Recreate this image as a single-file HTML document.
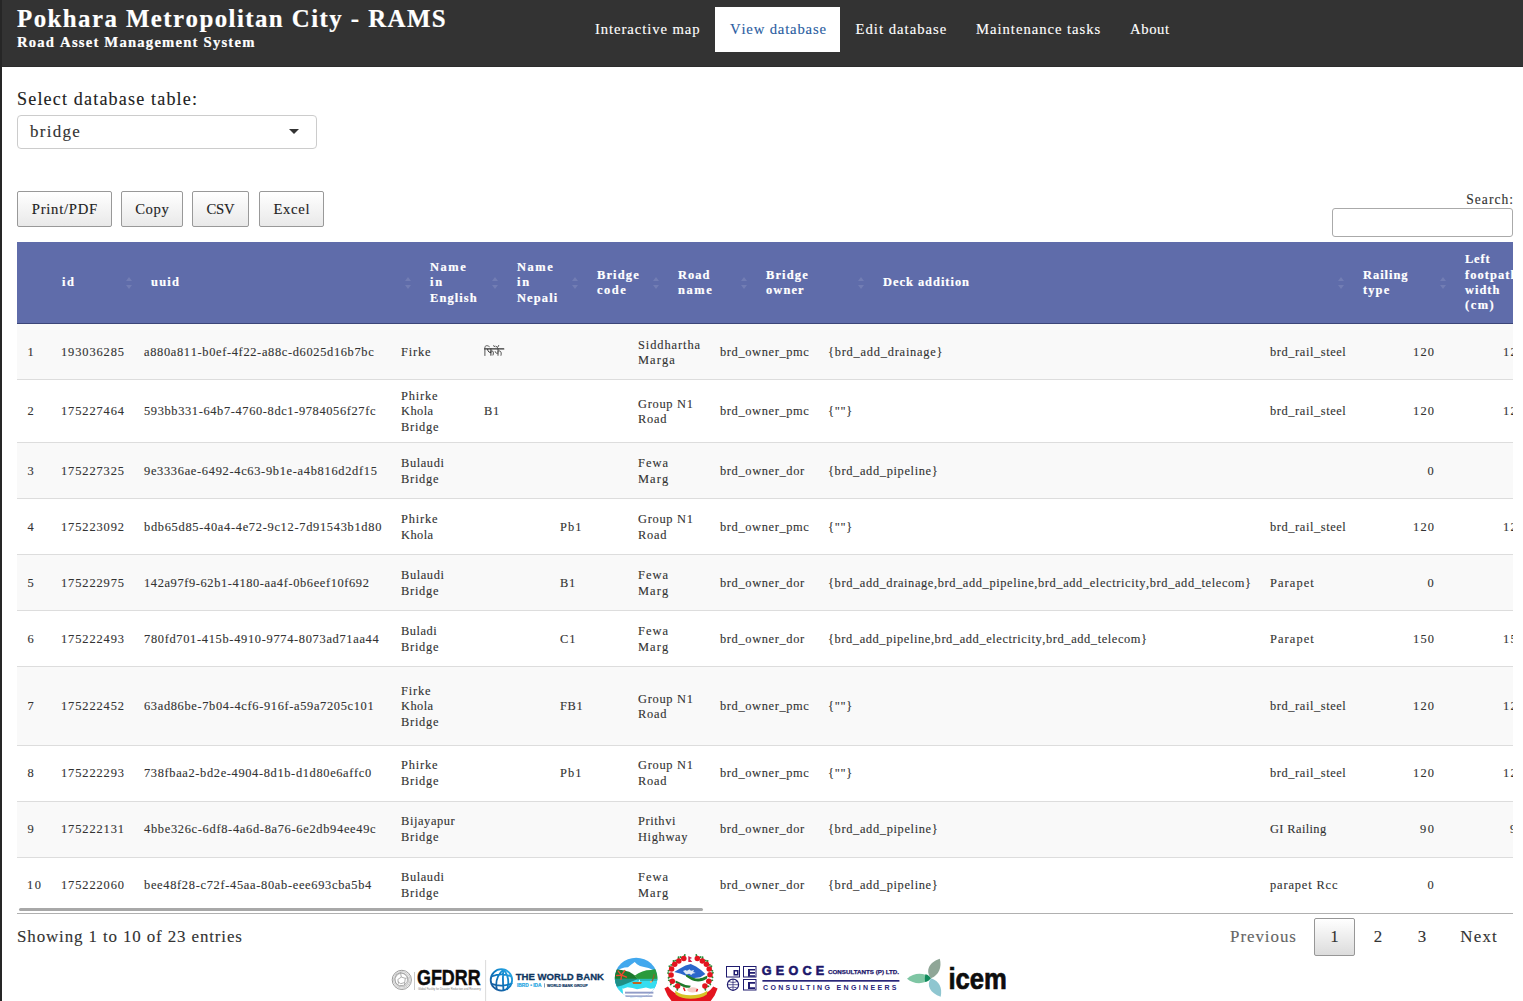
<!DOCTYPE html>
<html><head><meta charset="utf-8"><title>Pokhara Metropolitan City - RAMS</title>
<style>
:root{--k:1.13;--ff:"Liberation Serif";--st:0.12px;--sb:0.2px;}
*{box-sizing:border-box;}
html,body{margin:0;padding:0;}
body{width:1523px;height:1001px;overflow:hidden;position:relative;background:#fff;font-family:var(--ff),serif;color:#333;}
.abs{position:absolute;}
.t{white-space:nowrap;font-variant-ligatures:none;font-kerning:none;-webkit-text-stroke:var(--st) currentColor;}
.b .t,.h .t{-webkit-text-stroke:var(--sb) currentColor;}
#lb{left:0;top:0;width:2px;height:1001px;background:#262626;}
#hdr{left:0;top:0;width:1523px;height:67px;background:#333;border-bottom:1px solid #2c2c2c;}
#title{left:17px;top:6px;font-size:calc(22px*var(--k));line-height:26px;font-weight:bold;color:#fff;}
#sub{left:17px;top:35px;font-size:calc(13px*var(--k));line-height:16px;font-weight:bold;color:#fff;}
.nav{white-space:nowrap;top:7px;height:45px;line-height:45px;font-size:calc(13px*var(--k));color:#fff;padding:0 15px;}
.nav.act{background:#fff;color:#2a5d9f;}
#lbl{left:17px;top:89px;font-size:calc(16px*var(--k));line-height:22px;color:#222;}
#sel{left:17px;top:115px;width:300px;height:34px;border:1px solid #ccc;border-radius:4px;background:#fff;}
#selt{left:30px;top:121px;font-size:calc(15px*var(--k));line-height:22px;color:#333;}
#caret{left:289px;top:129px;width:0;height:0;border-left:5px solid transparent;border-right:5px solid transparent;border-top:5px solid #333;}
.btn{top:191px;height:36px;border:1px solid #999;border-radius:2px;background:linear-gradient(to bottom,#fff 0%,#e9e9e9 100%);font-size:calc(13px*var(--k));line-height:34px;color:#222;text-align:center;}
#srl{right:10px;top:191px;font-size:calc(12px*var(--k));line-height:18px;color:#333;}
#sri{left:1332px;top:208px;width:181px;height:29px;border:1px solid #aaa;border-radius:3px;background:#fff;}
#wrap{left:17px;top:242px;width:1496px;height:672px;overflow:hidden;}
#th{left:0;top:0;width:1496px;height:82px;background:#5f6caa;border-bottom:1px solid #3c4679;}
.h{font-size:calc(11px*var(--k));line-height:15.4px;font-weight:bold;color:#fff;}
.si{width:0;height:0;border-left:3px solid transparent;border-right:3px solid transparent;opacity:.12;}
.si.u{border-bottom:4px solid #fff;}
.si.dn{border-top:4px solid #fff;}
table{border-collapse:separate;border-spacing:0;table-layout:fixed;}
#tb{left:0;top:82px;width:1517px;}
#tb td{white-space:nowrap;font-size:calc(11px*var(--k));line-height:15.4px;padding:0 10px;vertical-align:middle;border-top:1px solid #ddd;color:#333;overflow:hidden;}
#tb tr:first-child td{border-top:0;padding-top:3px;}
#tb tr.d td{padding-top:2px;}
#tb tr.o td{background:#f9f9f9;}
#tb td.r{text-align:right;}
#sb{left:2px;top:666px;width:684px;height:3px;border-radius:2px;background:#a8a8a8;}
#bl{left:0;top:671px;width:1496px;height:1px;background:#b0b0b0;}
#info{left:17px;top:926px;font-size:calc(15px*var(--k));line-height:21px;color:#333;}
.pg{top:918px;height:38px;line-height:36px;font-size:calc(15px*var(--k));text-align:center;border:1px solid transparent;border-radius:2px;color:#333;}
.pg.cur{border-color:#979797;background:linear-gradient(to bottom,#fff 0%,#dcdcdc 100%);}
.pg.dis{color:#666;}
</style></head><body>
<div class="abs" id="hdr"></div>
<div class="abs" id="lb"></div>
<div class="abs b" id="title"><span class="t" style="letter-spacing: 1.445px; margin-right: -1.445px;">Pokhara Metropolitan City - RAMS</span></div>
<div class="abs b" id="sub" style="top: 34px;"><span class="t" style="letter-spacing: 1.192px; margin-right: -1.192px;">Road Asset Management System</span></div>
<div class="abs nav" style="left:580px"><span class="t" style="letter-spacing: 0.92px; margin-right: -0.92px;">Interactive map</span></div>
<div class="abs nav act" style="left:715px;width:125px"><span class="t" style="letter-spacing: 0.828px; margin-right: -0.828px;">View database</span></div>
<div class="abs nav" style="left:840.5px"><span class="t" style="letter-spacing: 1.008px; margin-right: -1.008px;">Edit database</span></div>
<div class="abs nav" style="left:961px"><span class="t" style="letter-spacing: 0.963px; margin-right: -0.963px;">Maintenance tasks</span></div>
<div class="abs nav" style="left:1115px"><span class="t" style="letter-spacing: 0.605px; margin-right: -0.605px;">About</span></div>
<div class="abs" id="lbl" style="top: 88px;"><span class="t" style="letter-spacing: 1.161px; margin-right: -1.161px;">Select database table:</span></div>
<div class="abs" id="sel"></div>
<div class="abs" id="selt"><span class="t" style="letter-spacing: 1.275px; margin-right: -1.275px;">bridge</span></div>
<div class="abs" id="caret"></div>
<div class="abs btn" style="left:17px;width:95px"><span class="t" style="letter-spacing: 0.713px; margin-right: -0.713px;">Print/PDF</span></div>
<div class="abs btn" style="left:121px;width:62px"><span class="t" style="letter-spacing: 0.542px; margin-right: -0.542px;">Copy</span></div>
<div class="abs btn" style="left:192px;width:57px"><span class="t" style="letter-spacing: -0.164px; margin-right: 0.164px;">CSV</span></div>
<div class="abs btn" style="left:259px;width:65px"><span class="t" style="letter-spacing: 0.629px; margin-right: -0.629px;">Excel</span></div>
<div class="abs" id="srl"><span class="t" style="letter-spacing: 1.016px; margin-right: -1.016px;">Search:</span></div>
<div class="abs" id="sri"></div>
<div class="abs" id="wrap">
<div class="abs" id="th"></div>
<div class="abs h" style="left:45px;top:33.3px"><span class="t" style="letter-spacing: 1.5px; margin-right: -1.5px;">id</span></div>
<div class="abs h" style="left:134px;top:33.3px"><span class="t" style="letter-spacing: 1.229px; margin-right: -1.229px;">uuid</span></div>
<div class="abs si u" style="left:109.0px;top:35.0px"></div>
<div class="abs si dn" style="left:109.0px;top:43.3px"></div>
<div class="abs h" style="left:413px;top:17.9px"><span class="t" style="letter-spacing: 1.594px; margin-right: -1.594px;">Name</span><br><span class="t" style="letter-spacing: 1.813px; margin-right: -1.813px;">in</span><br><span class="t" style="letter-spacing: 1.094px; margin-right: -1.094px;">English</span></div>
<div class="abs si u" style="left:388.0px;top:35.0px"></div>
<div class="abs si dn" style="left:388.0px;top:43.3px"></div>
<div class="abs h" style="left:500px;top:17.9px"><span class="t" style="letter-spacing: 1.594px; margin-right: -1.594px;">Name</span><br><span class="t" style="letter-spacing: 1.813px; margin-right: -1.813px;">in</span><br><span class="t" style="letter-spacing: 1.144px; margin-right: -1.144px;">Nepali</span></div>
<div class="abs si u" style="left:475.0px;top:35.0px"></div>
<div class="abs si dn" style="left:475.0px;top:43.3px"></div>
<div class="abs h" style="left:580px;top:25.6px"><span class="t" style="letter-spacing: 1.153px; margin-right: -1.153px;">Bridge</span><br><span class="t" style="letter-spacing: 1.526px; margin-right: -1.526px;">code</span></div>
<div class="abs si u" style="left:555.0px;top:35.0px"></div>
<div class="abs si dn" style="left:555.0px;top:43.3px"></div>
<div class="abs h" style="left:661px;top:25.6px"><span class="t" style="letter-spacing: 1px; margin-right: -1px;">Road</span><br><span class="t" style="letter-spacing: 1.594px; margin-right: -1.594px;">name</span></div>
<div class="abs si u" style="left:636.0px;top:35.0px"></div>
<div class="abs si dn" style="left:636.0px;top:43.3px"></div>
<div class="abs h" style="left:749px;top:25.6px"><span class="t" style="letter-spacing: 1.153px; margin-right: -1.153px;">Bridge</span><br><span class="t" style="letter-spacing: 1.121px; margin-right: -1.121px;">owner</span></div>
<div class="abs si u" style="left:724.0px;top:35.0px"></div>
<div class="abs si dn" style="left:724.0px;top:43.3px"></div>
<div class="abs h" style="left:866px;top:33.3px"><span class="t" style="letter-spacing: 0.982px; margin-right: -0.982px;">Deck addition</span></div>
<div class="abs si u" style="left:841.0px;top:35.0px"></div>
<div class="abs si dn" style="left:841.0px;top:43.3px"></div>
<div class="abs h" style="left:1346px;top:25.6px"><span class="t" style="letter-spacing: 0.974px; margin-right: -0.974px;">Railing</span><br><span class="t" style="letter-spacing: 1.13px; margin-right: -1.13px;">type</span></div>
<div class="abs si u" style="left:1321.0px;top:35.0px"></div>
<div class="abs si dn" style="left:1321.0px;top:43.3px"></div>
<div class="abs h" style="left:1448px;top:10.2px"><span class="t" style="letter-spacing: 0.823px; margin-right: -0.823px;">Left</span><br><span class="t" style="letter-spacing: 1.074px; margin-right: -1.074px;">footpath</span><br><span class="t" style="letter-spacing: 1.008px; margin-right: -1.008px;">width</span><br><span class="t" style="letter-spacing: 1.536px; margin-right: -1.536px;">(cm)</span></div>
<div class="abs si u" style="left:1423.0px;top:35.0px"></div>
<div class="abs si dn" style="left:1423.0px;top:43.3px"></div>

<table class="abs" id="tb">
<colgroup><col style="width:34px"><col style="width:83px"><col style="width:257px"><col style="width:83px"><col style="width:76px"><col style="width:78px"><col style="width:82px"><col style="width:108px"><col style="width:442px"><col style="width:96px"><col style="width:88px"><col style="width:90px"></colgroup>
<tbody><tr class="o" style="height:55px"><td><span class="t" style="padding-left: 0.391px; padding-right: 0.391px;">1</span></td><td><span class="t" style="letter-spacing: 0.887px; margin-right: -0.887px;">193036285</span></td><td><span class="t" style="letter-spacing: 0.65px; margin-right: -0.65px;">a880a811-b0ef-4f22-a88c-d6025d16b7bc</span></td><td><span class="t" style="letter-spacing: 0.84px; margin-right: -0.84px;">Firke</span></td><td><svg width="21" height="15" viewBox="0 0 21 15" style="display:inline-block;vertical-align:middle;position:relative;top:-2.400px"><g fill="none" stroke="#333" stroke-width="1" stroke-linecap="round"><path d="M0 5.900H19.800" stroke-width="1.100"></path><path d="M.9 12.500V4.500C1 2.600 3 1.900 5.300 3.600" stroke="#555"></path><path d="M6.900 5.900V12.300M3.600 6.400C3.900 9 5.500 9.700 6.900 9.500M6.900 8.200C9.200 7 10 9.500 9 12"></path><path d="M14 5.900V12.300M11.200 8.700C11.500 10.300 12.800 10.500 14 10M14 8.200C16.500 7 17.800 9 17 12.300M9.500 2.800L11 3.600M14.700 2.500L13.500 4.500L12 3.300" stroke-width=".9"></path></g></svg></td><td></td><td><span class="t" style="letter-spacing: 0.92px; margin-right: -0.92px;">Siddhartha</span><br><span class="t" style="letter-spacing: 1.066px; margin-right: -1.066px;">Marga</span></td><td><span class="t" style="letter-spacing: 0.621px; margin-right: -0.621px;">brd_owner_pmc</span></td><td><span class="t" style="letter-spacing: 0.762px; margin-right: -0.762px;">{brd_add_drainage}</span></td><td><span class="t" style="letter-spacing: 0.577px; margin-right: -0.577px;">brd_rail_steel</span></td><td class="r"><span class="t" style="letter-spacing: 1.18px; margin-right: -1.18px;">120</span></td><td class="r"><span class="t" style="letter-spacing: 1.18px; margin-right: -1.18px;">120</span></td></tr>
<tr class="e d" style="height:63px"><td><span class="t" style="padding-left: 0.391px; padding-right: 0.391px;">2</span></td><td><span class="t" style="letter-spacing: 0.887px; margin-right: -0.887px;">175227464</span></td><td><span class="t" style="letter-spacing: 0.62px; margin-right: -0.62px;">593bb331-64b7-4760-8dc1-9784056f27fc</span></td><td><span class="t" style="letter-spacing: 0.8px; margin-right: -0.8px;">Phirke</span><br><span class="t" style="letter-spacing: 0.414px; margin-right: -0.414px;">Khola</span><br><span class="t" style="letter-spacing: 0.728px; margin-right: -0.728px;">Bridge</span></td><td><span class="t" style="letter-spacing: 0.594px; margin-right: -0.594px;">B1</span></td><td></td><td><span class="t" style="letter-spacing: 0.699px; margin-right: -0.699px;">Group N1</span><br><span class="t" style="letter-spacing: 0.76px; margin-right: -0.76px;">Road</span></td><td><span class="t" style="letter-spacing: 0.621px; margin-right: -0.621px;">brd_owner_pmc</span></td><td><span class="t" style="letter-spacing: 0.682px; margin-right: -0.682px;">{""}</span></td><td><span class="t" style="letter-spacing: 0.577px; margin-right: -0.577px;">brd_rail_steel</span></td><td class="r"><span class="t" style="letter-spacing: 1.18px; margin-right: -1.18px;">120</span></td><td class="r"><span class="t" style="letter-spacing: 1.18px; margin-right: -1.18px;">120</span></td></tr>
<tr class="o d" style="height:56px"><td><span class="t" style="padding-left: 0.391px; padding-right: 0.391px;">3</span></td><td><span class="t" style="letter-spacing: 0.887px; margin-right: -0.887px;">175227325</span></td><td><span class="t" style="letter-spacing: 0.681px; margin-right: -0.681px;">9e3336ae-6492-4c63-9b1e-a4b816d2df15</span></td><td><span class="t" style="letter-spacing: 0.591px; margin-right: -0.591px;">Bulaudi</span><br><span class="t" style="letter-spacing: 0.728px; margin-right: -0.728px;">Bridge</span></td><td></td><td></td><td><span class="t" style="letter-spacing: 1.073px; margin-right: -1.073px;">Fewa</span><br><span class="t" style="letter-spacing: 1.073px; margin-right: -1.073px;">Marg</span></td><td><span class="t" style="letter-spacing: 0.63px; margin-right: -0.63px;">brd_owner_dor</span></td><td><span class="t" style="letter-spacing: 0.64px; margin-right: -0.64px;">{brd_add_pipeline}</span></td><td></td><td class="r"><span class="t" style="padding-left: 0.391px; padding-right: 0.391px;">0</span></td><td class="r"><span class="t" style="padding-left: 0.391px; padding-right: 0.391px;">0</span></td></tr>
<tr class="e d" style="height:56px"><td><span class="t" style="padding-left: 0.391px; padding-right: 0.391px;">4</span></td><td><span class="t" style="letter-spacing: 0.887px; margin-right: -0.887px;">175223092</span></td><td><span class="t" style="letter-spacing: 0.69px; margin-right: -0.69px;">bdb65d85-40a4-4e72-9c12-7d91543b1d80</span></td><td><span class="t" style="letter-spacing: 0.8px; margin-right: -0.8px;">Phirke</span><br><span class="t" style="letter-spacing: 0.414px; margin-right: -0.414px;">Khola</span></td><td></td><td><span class="t" style="letter-spacing: 1.055px; margin-right: -1.055px;">Pb1</span></td><td><span class="t" style="letter-spacing: 0.699px; margin-right: -0.699px;">Group N1</span><br><span class="t" style="letter-spacing: 0.76px; margin-right: -0.76px;">Road</span></td><td><span class="t" style="letter-spacing: 0.621px; margin-right: -0.621px;">brd_owner_pmc</span></td><td><span class="t" style="letter-spacing: 0.682px; margin-right: -0.682px;">{""}</span></td><td><span class="t" style="letter-spacing: 0.577px; margin-right: -0.577px;">brd_rail_steel</span></td><td class="r"><span class="t" style="letter-spacing: 1.18px; margin-right: -1.18px;">120</span></td><td class="r"><span class="t" style="letter-spacing: 1.18px; margin-right: -1.18px;">120</span></td></tr>
<tr class="o d" style="height:56px"><td><span class="t" style="padding-left: 0.391px; padding-right: 0.391px;">5</span></td><td><span class="t" style="letter-spacing: 0.887px; margin-right: -0.887px;">175222975</span></td><td><span class="t" style="letter-spacing: 0.611px; margin-right: -0.611px;">142a97f9-62b1-4180-aa4f-0b6eef10f692</span></td><td><span class="t" style="letter-spacing: 0.591px; margin-right: -0.591px;">Bulaudi</span><br><span class="t" style="letter-spacing: 0.728px; margin-right: -0.728px;">Bridge</span></td><td></td><td><span class="t" style="letter-spacing: 0.594px; margin-right: -0.594px;">B1</span></td><td><span class="t" style="letter-spacing: 1.073px; margin-right: -1.073px;">Fewa</span><br><span class="t" style="letter-spacing: 1.073px; margin-right: -1.073px;">Marg</span></td><td><span class="t" style="letter-spacing: 0.63px; margin-right: -0.63px;">brd_owner_dor</span></td><td><span class="t" style="letter-spacing: 0.606px; margin-right: -0.606px;">{brd_add_drainage,brd_add_pipeline,brd_add_electricity,brd_add_telecom}</span></td><td><span class="t" style="letter-spacing: 1.083px; margin-right: -1.083px;">Parapet</span></td><td class="r"><span class="t" style="padding-left: 0.391px; padding-right: 0.391px;">0</span></td><td class="r"><span class="t" style="padding-left: 0.391px; padding-right: 0.391px;">0</span></td></tr>
<tr class="e d" style="height:56px"><td><span class="t" style="padding-left: 0.391px; padding-right: 0.391px;">6</span></td><td><span class="t" style="letter-spacing: 0.887px; margin-right: -0.887px;">175222493</span></td><td><span class="t" style="letter-spacing: 0.673px; margin-right: -0.673px;">780fd701-415b-4910-9774-8073ad71aa44</span></td><td><span class="t" style="letter-spacing: 0.537px; margin-right: -0.537px;">Buladi</span><br><span class="t" style="letter-spacing: 0.728px; margin-right: -0.728px;">Bridge</span></td><td></td><td><span class="t" style="letter-spacing: 0.922px; margin-right: -0.922px;">C1</span></td><td><span class="t" style="letter-spacing: 1.073px; margin-right: -1.073px;">Fewa</span><br><span class="t" style="letter-spacing: 1.073px; margin-right: -1.073px;">Marg</span></td><td><span class="t" style="letter-spacing: 0.63px; margin-right: -0.63px;">brd_owner_dor</span></td><td><span class="t" style="letter-spacing: 0.588px; margin-right: -0.588px;">{brd_add_pipeline,brd_add_electricity,brd_add_telecom}</span></td><td><span class="t" style="letter-spacing: 1.083px; margin-right: -1.083px;">Parapet</span></td><td class="r"><span class="t" style="letter-spacing: 1.18px; margin-right: -1.18px;">150</span></td><td class="r"><span class="t" style="letter-spacing: 1.18px; margin-right: -1.18px;">150</span></td></tr>
<tr class="o d" style="height:79px"><td><span class="t" style="padding-left: 0.391px; padding-right: 0.391px;">7</span></td><td><span class="t" style="letter-spacing: 0.887px; margin-right: -0.887px;">175222452</span></td><td><span class="t" style="letter-spacing: 0.647px; margin-right: -0.647px;">63ad86be-7b04-4cf6-916f-a59a7205c101</span></td><td><span class="t" style="letter-spacing: 0.84px; margin-right: -0.84px;">Firke</span><br><span class="t" style="letter-spacing: 0.414px; margin-right: -0.414px;">Khola</span><br><span class="t" style="letter-spacing: 0.728px; margin-right: -0.728px;">Bridge</span></td><td></td><td><span class="t" style="letter-spacing: 0.656px; margin-right: -0.656px;">FB1</span></td><td><span class="t" style="letter-spacing: 0.699px; margin-right: -0.699px;">Group N1</span><br><span class="t" style="letter-spacing: 0.76px; margin-right: -0.76px;">Road</span></td><td><span class="t" style="letter-spacing: 0.621px; margin-right: -0.621px;">brd_owner_pmc</span></td><td><span class="t" style="letter-spacing: 0.682px; margin-right: -0.682px;">{""}</span></td><td><span class="t" style="letter-spacing: 0.577px; margin-right: -0.577px;">brd_rail_steel</span></td><td class="r"><span class="t" style="letter-spacing: 1.18px; margin-right: -1.18px;">120</span></td><td class="r"><span class="t" style="letter-spacing: 1.18px; margin-right: -1.18px;">120</span></td></tr>
<tr class="e" style="height:56px"><td><span class="t" style="padding-left: 0.391px; padding-right: 0.391px;">8</span></td><td><span class="t" style="letter-spacing: 0.887px; margin-right: -0.887px;">175222293</span></td><td><span class="t" style="letter-spacing: 0.637px; margin-right: -0.637px;">738fbaa2-bd2e-4904-8d1b-d1d80e6affc0</span></td><td><span class="t" style="letter-spacing: 0.8px; margin-right: -0.8px;">Phirke</span><br><span class="t" style="letter-spacing: 0.728px; margin-right: -0.728px;">Bridge</span></td><td></td><td><span class="t" style="letter-spacing: 1.055px; margin-right: -1.055px;">Pb1</span></td><td><span class="t" style="letter-spacing: 0.699px; margin-right: -0.699px;">Group N1</span><br><span class="t" style="letter-spacing: 0.76px; margin-right: -0.76px;">Road</span></td><td><span class="t" style="letter-spacing: 0.621px; margin-right: -0.621px;">brd_owner_pmc</span></td><td><span class="t" style="letter-spacing: 0.682px; margin-right: -0.682px;">{""}</span></td><td><span class="t" style="letter-spacing: 0.577px; margin-right: -0.577px;">brd_rail_steel</span></td><td class="r"><span class="t" style="letter-spacing: 1.18px; margin-right: -1.18px;">120</span></td><td class="r"><span class="t" style="letter-spacing: 1.18px; margin-right: -1.18px;">120</span></td></tr>
<tr class="o" style="height:56px"><td><span class="t" style="padding-left: 0.391px; padding-right: 0.391px;">9</span></td><td><span class="t" style="letter-spacing: 0.887px; margin-right: -0.887px;">175222131</span></td><td><span class="t" style="letter-spacing: 0.685px; margin-right: -0.685px;">4bbe326c-6df8-4a6d-8a76-6e2db94ee49c</span></td><td><span class="t" style="letter-spacing: 0.594px; margin-right: -0.594px;">Bijayapur</span><br><span class="t" style="letter-spacing: 0.728px; margin-right: -0.728px;">Bridge</span></td><td></td><td></td><td><span class="t" style="letter-spacing: 0.599px; margin-right: -0.599px;">Prithvi</span><br><span class="t" style="letter-spacing: 0.648px; margin-right: -0.648px;">Highway</span></td><td><span class="t" style="letter-spacing: 0.63px; margin-right: -0.63px;">brd_owner_dor</span></td><td><span class="t" style="letter-spacing: 0.64px; margin-right: -0.64px;">{brd_add_pipeline}</span></td><td><span class="t" style="letter-spacing: 0.373px; margin-right: -0.373px;">GI Railing</span></td><td class="r"><span class="t" style="letter-spacing: 1.578px; margin-right: -1.578px;">90</span></td><td class="r"><span class="t" style="letter-spacing: 1.578px; margin-right: -1.578px;">90</span></td></tr>
<tr class="e" style="height:56px"><td><span class="t" style="letter-spacing: 1.578px; margin-right: -1.578px;">10</span></td><td><span class="t" style="letter-spacing: 0.887px; margin-right: -0.887px;">175222060</span></td><td><span class="t" style="letter-spacing: 0.679px; margin-right: -0.679px;">bee48f28-c72f-45aa-80ab-eee693cba5b4</span></td><td><span class="t" style="letter-spacing: 0.591px; margin-right: -0.591px;">Bulaudi</span><br><span class="t" style="letter-spacing: 0.728px; margin-right: -0.728px;">Bridge</span></td><td></td><td></td><td><span class="t" style="letter-spacing: 1.073px; margin-right: -1.073px;">Fewa</span><br><span class="t" style="letter-spacing: 1.073px; margin-right: -1.073px;">Marg</span></td><td><span class="t" style="letter-spacing: 0.63px; margin-right: -0.63px;">brd_owner_dor</span></td><td><span class="t" style="letter-spacing: 0.64px; margin-right: -0.64px;">{brd_add_pipeline}</span></td><td><span class="t" style="letter-spacing: 0.853px; margin-right: -0.853px;">parapet Rcc</span></td><td class="r"><span class="t" style="padding-left: 0.391px; padding-right: 0.391px;">0</span></td><td class="r"><span class="t" style="padding-left: 0.391px; padding-right: 0.391px;">0</span></td></tr>

</tbody></table>
<div class="abs" id="sb"></div>
<div class="abs" id="bl"></div>
</div>
<div class="abs" id="info"><span class="t" style="letter-spacing: 0.876px; margin-right: -0.876px;">Showing 1 to 10 of 23 entries</span></div>
<div class="abs pg dis" style="left:1215px;width:96px"><span class="t" style="letter-spacing: 0.933px; margin-right: -0.933px;">Previous</span></div>
<div class="abs pg cur" style="left:1314px;width:41px"><span class="t" style="padding-left: 0.539px; padding-right: 0.539px;">1</span></div>
<div class="abs pg" style="left:1358px;width:40px"><span class="t" style="padding-left: 0.539px; padding-right: 0.539px;">2</span></div>
<div class="abs pg" style="left:1402px;width:40px"><span class="t" style="padding-left: 0.539px; padding-right: 0.539px;">3</span></div>
<div class="abs pg" style="left:1444px;width:69px"><span class="t" style="letter-spacing: 1.188px; margin-right: -1.188px;">Next</span></div>
<svg class="abs" style="left:385px;top:951px" width="640" height="50" viewBox="385 951 640 50" font-family="Liberation Sans, sans-serif">
<defs>
<linearGradient id="wbg" x1="0" y1="1" x2="1" y2="0"><stop offset="0" stop-color="#1b4f8f"></stop><stop offset=".55" stop-color="#0a7cc4"></stop><stop offset="1" stop-color="#35b6ee"></stop></linearGradient>
<clipPath id="pkc"><ellipse cx="636.100" cy="977.900" rx="21.300" ry="20.200"></ellipse></clipPath>
</defs>
<!-- GFDRR -->
<g fill="none" stroke="#9a9a9a" stroke-width=".8">
<circle cx="401.8" cy="979.9" r="9.6" stroke="#8e8e8e" stroke-width=".9"></circle>
<circle cx="401.8" cy="979.9" r="8.3" stroke="#bbb"></circle><circle cx="401.8" cy="979.9" r="6.8" stroke="#c8c8c8" stroke-width="1.2"></circle>
<path d="M396.5 974.5l4-2 4.2 1.6 3 3.6-.6 4.6-3.4 3-4.4.4-3.6-2.6-1-4.4zM400.5 972.5l.8 4.6 4 1.2 2.400-.6M401.300 977.100l-3.500 2.400.8 4.200M405.300 978.300l-.6 4.200-4 1.200-2.900-2M404.700 982.500l.000 2.800"></path>
</g>
<rect x="414" y="972" width=".8" height="18" fill="#bdbdbd"></rect>
<text x="417" y="984.800" font-size="21.200" font-weight="bold" fill="#0b0b0b" stroke="#0b0b0b" stroke-width=".45" textLength="63.600" lengthAdjust="spacingAndGlyphs">GFDRR</text>
<text x="418" y="989.600" font-size="2.600" fill="#777" textLength="62.800" lengthAdjust="spacingAndGlyphs">Global Facility for Disaster Reduction and Recovery</text>
<rect x="485.200" y="960" width=".9" height="41" fill="#d6d6d6"></rect>
<!-- World Bank -->
<g fill="none" stroke="url(#wbg)" stroke-width="1.800">
<circle cx="501.400" cy="979.900" r="10.700"></circle>
<path d="M503.500 969.400c-6 5.500-8.500 13-6.500 20.700M503.500 969.400c4.500 5.500 6 13 3.500 20.500M491.500 976.500c6-2.500 14-2.800 20.300.2M491 983.500c6.500 3 15 3 21.300-.5M503.500 969.400c-1 7-0.600 14 0 21"></path>
</g>
<text x="515.700" y="980.200" font-size="9.700" font-weight="bold" fill="#0e3560" stroke="#0e3560" stroke-width=".3" textLength="88.300" lengthAdjust="spacingAndGlyphs">THE WORLD BANK</text>
<text x="517" y="987" font-size="4.600" font-weight="bold" fill="#2aa7e3" stroke="#2aa7e3" stroke-width=".2" textLength="24.500" lengthAdjust="spacingAndGlyphs">IBRD • IDA</text>
<rect x="544.100" y="983.300" width=".6" height="4.200" fill="#2a5a8a"></rect>
<text x="547" y="987" font-size="4.300" font-weight="bold" fill="#123a66" stroke="#123a66" stroke-width=".2" textLength="40.700" lengthAdjust="spacingAndGlyphs">WORLD BANK GROUP</text>
<!-- Pokhara -->
<g clip-path="url(#pkc)">
<rect x="614" y="956" width="45" height="45" fill="#42a8ee"></rect>
<path d="M617 971l3.500-2.200 4-1.200 3.500-.400 3-2.400 3.700-2.700 2.300 2.200 3 1.800 4 .800 4.500 1.200 4.700 1.900 3 1.500v9h-39z" fill="#fff"></path>
<path d="M614 969.300l4 .300 5 .600 6.200 1.500 3.200 2 2.500 1.800 3.100 3.500v2h-24z" fill="#1c7a2e"></path>
<path d="M634.900 975.500l3.500-2.300 4-1.800 4.100-1.100 4.500-.300 3.600-.700 4.400-1v11.500h-21l-2-2.500z" fill="#2a9a3c"></path>
<rect x="614" y="978.900" width="45" height="11" fill="#35ddf0"></rect>
<path d="M614 978.900h24l-8 3.300-8 3.300-8 2z" fill="#1f8f86"></path>
<path d="M636 978.900h23v2.200h-21z" fill="#1f9a8a" opacity=".55"></path>
<path d="M614 988.500l5-.800 4 1 4.500-1.500 5 .800 4.500 1.300 4-.700 5-1 4.500 1.200 4-.600 4.500-.700V1002H614z" fill="#fff"></path><path d="M613 987H621.500L622.600 989.500 623.500 997.500 627 1002H613z" fill="#35ddf0"></path>
</g>
<path d="M621.500 975.100l-3.300-4M621.500 975.100l3.300-4.600M621.500 975.100l5 2M621.500 975.100l-.500 4.300M621.500 975.100l-4.800.400" stroke="#f04a30" stroke-width="1.400" stroke-linecap="round"></path>
<path d="M632.300 982h9.600l-.800 2h-8z" fill="#c0651f"></path><path d="M638.500 981.500l.900-2.300.900 2.300z" fill="#fff"></path>
<path d="M653.800 974l.900.300-1.300 5.200-1.200 2.600-1-.600 1.400-3z" fill="#9a5a2a"></path><circle cx="650.900" cy="981.800" r="1.100" fill="#f0b070"></circle>
<rect x="625" y="991.700" width="28.400" height="1.900" fill="#7d8bbd" opacity=".85"></rect>
<rect x="625.500" y="995.300" width="27" height="1.700" fill="#8a97c4" opacity=".8"></rect>
<!-- Nepal emblem -->
<path d="M674.200 971.900L680 968.500 685.500 965.500 690.800 964 696 966.500 701 970 705.400 974.100 700.400 977.200 692.700 978.200 686 975.700 680 973.500z" fill="#2b66cc"></path>
<path d="M683 971l2.500-1 1.500.800 2.500-1.500 1.500 1.500 3-.800-.800 2 2.500 1-3 .500-1.500 1.500-2-1.200-3 .700z" fill="#fff" opacity=".85"></path>
<path d="M686 974.500c3 1 5 2.500 8 3.500 3.500 1 7 .500 10-1l3.600-1.500-.600 3c-3 2.500-8 3.500-12.500 2.500-3.500-.800-6-3-8.500-4.500z" fill="#1f7a2c"></path>
<path d="M675.500 980.500c4 1.500 7 3.500 10 4.500l5.300.800-1 2c-3.500.300-6.500-.500-9-2l-5.300-3z" fill="#1f7a2c"></path>
<ellipse cx="692.700" cy="989.800" rx="5.500" ry="2.600" fill="#f6cfc8"></ellipse>
<g stroke="#2a8a36" stroke-width="1.700" stroke-linecap="round"><path d="M682.4 957.9L680.4 956.9"></path><path d="M684.2 957.1L684.8 954.9"></path><path d="M677.3 960.8L675.1 960.5"></path><path d="M678.7 959.4L678.5 957.2"></path><path d="M673.2 964.6L671.1 965.0"></path><path d="M674.2 962.9L673.4 960.9"></path><path d="M670.3 969.8L668.3 970.9"></path><path d="M670.7 967.9L669.3 966.2"></path><path d="M670.1 976.2L668.5 977.8"></path><path d="M669.9 974.3L668.0 973.0"></path><path d="M671.7 982.7L670.7 984.6"></path><path d="M670.9 980.9L668.7 980.3"></path><path d="M677.5 987.6L677.3 989.8"></path><path d="M676.1 986.2L673.9 986.4"></path><path d="M696.9 957.1L696.3 954.9"></path><path d="M698.7 957.9L700.7 956.9"></path><path d="M702.4 959.4L702.6 957.2"></path><path d="M703.8 960.7L706.0 960.5"></path><path d="M706.9 962.9L707.7 960.8"></path><path d="M707.9 964.6L710.0 965.0"></path><path d="M710.1 967.9L711.5 966.2"></path><path d="M710.5 969.8L712.5 970.9"></path><path d="M711.2 973.9L713.0 972.7"></path><path d="M711.1 975.9L712.6 977.4"></path><path d="M710.2 980.9L712.4 980.3"></path><path d="M709.4 982.7L710.4 984.6"></path><path d="M706.4 986.2L708.6 986.3"></path><path d="M705.1 987.6L705.4 989.8"></path></g>
<g fill="#e3151f"><circle cx="683.8" cy="958.5" r="2.750"></circle><circle cx="678.8" cy="960.9" r="2.750"></circle><circle cx="674.7" cy="964.3" r="2.750"></circle><circle cx="671.6" cy="969.1" r="2.750"></circle><circle cx="671.1" cy="975.1" r="2.750"></circle><circle cx="672.3" cy="981.3" r="2.750"></circle><circle cx="677.6" cy="986.1" r="2.750"></circle><circle cx="697.3" cy="958.5" r="2.750"></circle><circle cx="702.3" cy="960.9" r="2.750"></circle><circle cx="706.4" cy="964.3" r="2.750"></circle><circle cx="709.2" cy="969.1" r="2.750"></circle><circle cx="710" cy="974.8" r="2.750"></circle><circle cx="708.8" cy="981.3" r="2.750"></circle><circle cx="704.9" cy="986.1" r="2.750"></circle></g>
<path d="M688.300 956.100l3.800 2-2.300 1 2.500 2.800h-4z" fill="#d4204c"></path>
<path d="M664.400 988.500l3.500-2 3 3.500c5 4.500 12 6.500 19.700 6.500s14.700-2 19.700-6.500l3-3.500 4.300 2-3 7-5 7h-37l-5-7z" fill="#e3151f"></path>
<path d="M675 990.400c4 3.300 9.500 4.800 15.600 4.800s12.500-1.500 17-4.800l-.800 4c-4 3-10 4.300-16.200 4.300s-11-1.300-15-4.300z" fill="#d6c326"></path>
<path d="M683.500 987.500l1.500 3.500M697.500 989l-1 2.500" stroke="#e3151f" stroke-width="1.500"></path>
<!-- GEOCE -->
<g fill="none" stroke="#1f1b6f" stroke-width="1">
<rect x="726.500" y="966.500" width="13" height="10.500"></rect><rect x="743.500" y="966.500" width="12.500" height="10.500"></rect><rect x="743.500" y="979.500" width="12.500" height="10.500"></rect>
<circle cx="733" cy="984.700" r="5.600" stroke-width="1.200"></circle><path d="M727.500 984.700h11M733 979v11.400M729 981.500c2.500 1.200 5.500 1.200 8 0M729 988c2.500-1.200 5.500-1.200 8 0" stroke-width=".7"></path>
</g>
<g fill="#1f1b6f">
<path d="M733.500 970h5v5.500h-5zm1.500 1.500v2.500h2v-2.500z" fill-rule="evenodd"></path>
<path d="M748 969h7v1.600h-5v1.500h5v1.600h-5v1.500h5v1.600h-7z"></path>
<path d="M748 982h7v1.800h-5v3.500h5v1.800h-7z"></path>
</g>
<text x="761.800" y="975" font-size="12.600" font-weight="bold" fill="#1b176b" stroke="#1b176b" stroke-width=".6" textLength="62.400" lengthAdjust="spacing">GEOCE</text>
<text x="828" y="973.800" font-size="5.800" font-weight="bold" fill="#1b176b" stroke="#1b176b" stroke-width=".25" textLength="71" lengthAdjust="spacingAndGlyphs">CONSULTANTS (P) LTD.</text>
<rect x="762.400" y="980" width="137" height="1.700" fill="#2a2678"></rect>
<text x="763" y="989.700" font-size="7" font-weight="bold" fill="#27237a" textLength="133.500" lengthAdjust="spacing">CONSULTING ENGINEERS</text>
<!-- icem -->
<path d="M930.900 978.300C924 972 914 972.500 907 978.700 914 984.500 924 985 930.900 978.300z" fill="#7fc6a4"></path>
<path d="M930.900 978.300C925 971 929 962 939.800 958.700 942 967 939 975 930.900 978.300z" fill="#8fa697"></path>
<path d="M930.900 978.300C926 985 930 993.500 940.700 996.700 942.500 988 939.500 981 930.900 978.300z" fill="#8fc6d0"></path>
<path d="M925.500 974.200c2.500.6 4.200 2 5.400 4.100-1.500 2-3.200 3.200-5.600 3.800-.7-2.600-.6-5.300.2-7.900z" fill="#118a5c"></path>
<text x="948.400" y="988.600" font-size="29" font-weight="bold" fill="#0d0d0d" stroke="#0d0d0d" stroke-width=".7" textLength="58.400" lengthAdjust="spacingAndGlyphs">icem</text>
</svg>


</body></html>
